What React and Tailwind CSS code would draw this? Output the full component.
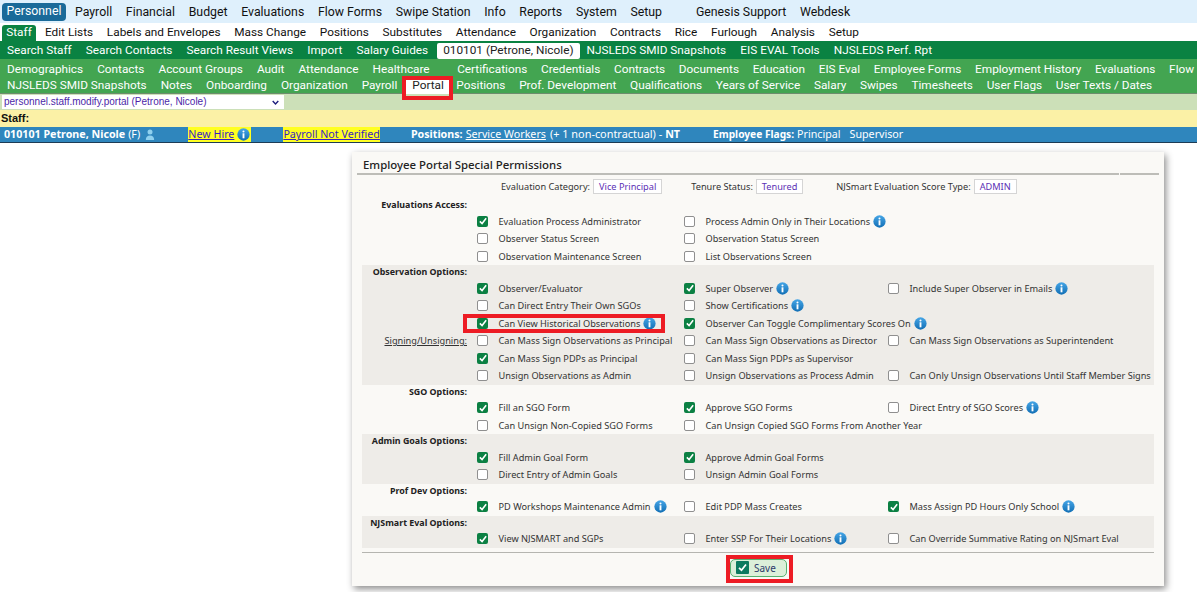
const NAV = "font-['Roboto',sans-serif] text-[11.8px] leading-none";

function Info({ className = "" }) {
  return (
    <svg viewBox="0 0 14 14" className={"w-[13px] h-[13px] shrink-0 " + className}>
      <defs>
        <linearGradient id="ig" x1="0" y1="0" x2="0" y2="1">
          <stop offset="0" stopColor="#45a5e6" />
          <stop offset="1" stopColor="#126fb5" />
        </linearGradient>
      </defs>
      <circle cx="7" cy="7" r="6.6" fill="url(#ig)" />
      <circle cx="7" cy="3.8" r="1.1" fill="#fff" />
      <rect x="6" y="5.7" width="2" height="5.4" fill="#fff" />
    </svg>
  );
}

function Box({ on }) {
  return on ? (
    <span className="w-[11px] h-[11px] rounded-[2px] bg-[#0b8043] flex items-center justify-center shrink-0">
      <svg viewBox="0 0 12 12" className="w-[10px] h-[10px]">
        <path d="M2.2 6.4 L4.9 9 L9.8 2.8" fill="none" stroke="#fff" strokeWidth="1.9" />
      </svg>
    </span>
  ) : (
    <span className="w-[11px] h-[11px] rounded-[2px] border border-[#8f8f8f] bg-white shrink-0" />
  );
}

function Cell({ c }) {
  if (!c) return <div />;
  return (
    <div className="flex items-center whitespace-nowrap">
      <Box on={c[0]} />
      <span className="ml-[10.5px] text-[#333]">{c[1]}</span>
      {c[2] && <Info className="ml-[3px]" />}
    </div>
  );
}

function Row({ label, cells }) {
  return (
    <div className="grid grid-cols-[115px_207px_204px_1fr] h-[17.5px] items-center">
      <div className="text-right pr-[10px] underline text-[#333] whitespace-nowrap">{label}</div>
      <Cell c={cells[0]} />
      <Cell c={cells[1]} />
      <Cell c={cells[2]} />
    </div>
  );
}

function Section({ title, gray, rows }) {
  return (
    <div className={gray ? "bg-[#eeece8]" : ""}>
      <div className="h-[14.5px] w-[105px] text-right font-bold text-[8.9px] text-[#222] whitespace-nowrap leading-[14.5px]">{title}</div>
      {rows.map((r, i) => (
        <Row key={i} label={r.label} cells={r.cells} />
      ))}
    </div>
  );
}

const sections = [
  { title: "Evaluations Access:", rows: [
    { cells: [[1, "Evaluation Process Administrator"], [0, "Process Admin Only in Their Locations", 1]] },
    { cells: [[0, "Observer Status Screen"], [0, "Observation Status Screen"]] },
    { cells: [[0, "Observation Maintenance Screen"], [0, "List Observations Screen"]] },
  ]},
  { title: "Observation Options:", gray: 1, rows: [
    { cells: [[1, "Observer/Evaluator"], [1, "Super Observer", 1], [0, "Include Super Observer in Emails", 1]] },
    { cells: [[0, "Can Direct Entry Their Own SGOs"], [0, "Show Certifications", 1]] },
    { cells: [[1, "Can View Historical Observations", 1], [1, "Observer Can Toggle Complimentary Scores On", 1]] },
    { label: "Signing/Unsigning:", cells: [[0, "Can Mass Sign Observations as Principal"], [0, "Can Mass Sign Observations as Director"], [0, "Can Mass Sign Observations as Superintendent"]] },
    { cells: [[1, "Can Mass Sign PDPs as Principal"], [0, "Can Mass Sign PDPs as Supervisor"]] },
    { cells: [[0, "Unsign Observations as Admin"], [0, "Unsign Observations as Process Admin"], [0, "Can Only Unsign Observations Until Staff Member Signs"]] },
  ]},
  { title: "SGO Options:", rows: [
    { cells: [[1, "Fill an SGO Form"], [1, "Approve SGO Forms"], [0, "Direct Entry of SGO Scores", 1]] },
    { cells: [[0, "Can Unsign Non-Copied SGO Forms"], [0, "Can Unsign Copied SGO Forms From Another Year"]] },
  ]},
  { title: "Admin Goals Options:", gray: 1, rows: [
    { cells: [[1, "Fill Admin Goal Form"], [1, "Approve Admin Goal Forms"]] },
    { cells: [[0, "Direct Entry of Admin Goals"], [0, "Unsign Admin Goal Forms"]] },
  ]},
  { title: "Prof Dev Options:", rows: [
    { cells: [[1, "PD Workshops Maintenance Admin", 1], [0, "Edit PDP Mass Creates"], [1, "Mass Assign PD Hours Only School", 1]] },
  ]},
  { title: "NJSmart Eval Options:", gray: 1, rows: [
    { cells: [[1, "View NJSMART and SGPs"], [0, "Enter SSP For Their Locations", 1], [0, "Can Override Summative Rating on NJSmart Eval"]] },
  ]},
];

const r1 = ["Payroll","Financial","Budget","Evaluations","Flow Forms","Swipe Station","Info","Reports","System","Setup"];
const r2 = ["Edit Lists","Labels and Envelopes","Mass Change","Positions","Substitutes","Attendance","Organization","Contracts","Rice","Furlough","Analysis","Setup"];
const r3a = ["Search Staff","Search Contacts","Search Result Views","Import","Salary Guides"];
const r3b = ["NJSLEDS SMID Snapshots","EIS EVAL Tools","NJSLEDS Perf. Rpt"];
const r4a = ["Demographics","Contacts","Account Groups","Audit","Attendance","Healthcare"];
const r4b = ["Certifications","Credentials","Contracts","Documents","Education","EIS Eval","Employee Forms","Employment History","Evaluations","Flow"];
const r5a = ["NJSLEDS SMID Snapshots","Notes","Onboarding","Organization","Payroll"];
const r5b = ["Positions","Prof. Development","Qualifications","Years of Service","Salary","Swipes","Timesheets","User Flags","User Texts / Dates"];

function Badge({ children }) {
  return <span className="ml-[3px] inline-flex items-center h-[15px] px-[5px] border border-[#d5d5d5] bg-white text-[#5b2fb5]">{children}</span>;
}

function Red({ className }) {
  return <div className={"absolute border-[4px] border-[#ed1c24] pointer-events-none " + className} />;
}

export default function App() {
  return (
    <div className={"relative w-[1197px] h-[592px] overflow-hidden bg-white " + NAV}>
      <div className="h-[23px] bg-[#dff0fc] flex items-center pl-[2px] text-[#111] whitespace-nowrap text-[12.3px]">
        <span className="h-[18px] w-[64px] flex items-center justify-center bg-[#1a6a99] text-white rounded-[4px]">Personnel</span>
        <div className="flex gap-[13.7px] ml-[9px] pt-[1px]">{r1.map((t, i) => <span key={i}>{t}</span>)}</div>
        <div className="flex gap-[13.7px] ml-[34px] pt-[1px]"><span>Genesis Support</span><span>Webdesk</span></div>
      </div>
      <div className="h-[18px] bg-white flex items-end pl-[2px] text-[#111] whitespace-nowrap">
        <span className="h-[16px] w-[34px] flex items-center justify-center bg-[#0a8242] text-white rounded-t-[3px]">Staff</span>
        <div className="flex gap-[13.7px] ml-[9px] h-[16px] items-center">{r2.map((t, i) => <span key={i}>{t}</span>)}</div>
      </div>
      <div className="h-[18px] bg-[#0a8242] flex items-center pl-[7px] pt-[1px] text-white whitespace-nowrap">
        <div className="flex gap-[14.2px]">{r3a.map((t, i) => <span key={i}>{t}</span>)}</div>
        <span className="ml-[9px] h-[16px] px-[6px] flex items-center bg-white text-[#222] rounded-[2px]">010101 (Petrone, Nicole)</span>
        <div className="flex gap-[14.2px] ml-[7px]">{r3b.map((t, i) => <span key={i}>{t}</span>)}</div>
      </div>
      <div className="h-[35px] bg-[#43a551] pl-[7px] pt-[3.5px] text-white whitespace-nowrap border-b border-[#6d8d6d]">
        <div className="h-[15px] flex items-center">
          <div className="flex gap-[14px]">{r4a.map((t, i) => <span key={i}>{t}</span>)}</div>
          <div className="flex gap-[13.7px] ml-[27.5px]">{r4b.map((t, i) => <span key={i}>{t}</span>)}</div>
        </div>
        <div className="h-[15px] mt-[1px] flex items-center">
          <div className="flex gap-[14px]">{r5a.map((t, i) => <span key={i}>{t}</span>)}</div>
          <span className="ml-[9px] h-[15px] px-[6px] flex items-center bg-white text-[#222]">Portal</span>
          <div className="flex gap-[13.7px] ml-[6.5px]">{r5b.map((t, i) => <span key={i}>{t}</span>)}</div>
        </div>
      </div>
      <div className="h-[16px] bg-[#cce0b8] pl-[2px] flex items-center">
        <div className="w-[282px] h-[14px] bg-white flex items-center justify-between pl-[2px] pr-[5px] text-[#4b1fa8] font-['Liberation_Sans',sans-serif] text-[10px]">
          <span>personnel.staff.modify.portal (Petrone, Nicole)</span>
          <svg viewBox="0 0 10 6" className="w-[7px] h-[5px]"><path d="M1 1 L5 5 L9 1" fill="none" stroke="#1c1c7c" strokeWidth="2" /></svg>
        </div>
      </div>
      <div className="h-[17px] bg-[#fbf1a6] flex items-center font-['Liberation_Sans',sans-serif] font-bold text-[11px] text-[#111] pl-[1px]">Staff:</div>
      <div className="h-[16px] bg-[#2f86bd] border-b border-[#1d3c55] flex items-center text-white font-['Noto_Sans',sans-serif] text-[10.7px] whitespace-nowrap">
        <b className="ml-[4px]">010101 Petrone, Nicole</b>
        <span className="ml-[3px]">(F)</span>
        <svg viewBox="0 0 12 14" className="ml-[5px] w-[10px] h-[12px]"><circle cx="6" cy="3.5" r="3" fill="#8fd0ee" /><path d="M1 13 Q1 7.5 6 7.5 Q11 7.5 11 13 Z" fill="#8fd0ee" /></svg>
        <span className="ml-[33px] h-full bg-[#ffff22] text-[#3a1fc0] underline flex items-center pr-[1px]">New Hire <Info className="ml-[3px]" /></span>
        <span className="ml-[32px] h-full bg-[#ffff22] text-[#3a1fc0] underline flex items-center">Payroll Not Verified</span>
        <b className="ml-[31px]">Positions:</b>
        <span className="ml-[3px] underline">Service Workers</span>
        <span className="ml-[4px] text-[10.9px]">(+ 1 non-contractual) -</span>
        <b className="ml-[3px]">NT</b>
        <b className="ml-[33px] text-[10.2px]">Employee Flags:</b>
        <span className="ml-[3px]">Principal</span>
        <span className="ml-[9px]">Supervisor</span>
      </div>

      <div className="ml-[352px] mt-[9px] w-[812px] h-[434px] bg-[#faf9f6] shadow-[2px_3px_7px_rgba(0,0,0,0.45)] font-['Noto_Sans',sans-serif] text-[9.2px] text-[#333]">
        <div className="mx-[5px] h-[21px] flex items-end pl-[6px]">
          <span className="text-[11.4px] font-medium text-[#222] leading-[16px]">Employee Portal Special Permissions</span>
        </div>
        <div className="mx-[5px] h-[2px] flex gap-[1px]">
          <div className="flex-1 bg-[#bdbdb8]" />
          <div className="w-[39px] bg-[#bdbdb8]" />
        </div>
        <div className="h-[23px] flex items-center whitespace-nowrap pl-[149px]">
          <span>Evaluation Category:</span><Badge>Vice Principal</Badge>
          <span className="ml-[29px]">Tenure Status:</span><Badge>Tenured</Badge>
          <span className="ml-[33px]">NJSmart Evaluation Score Type:</span><Badge>ADMIN</Badge>
        </div>
        <div className="mx-[10px]">
          {sections.map((s, i) => <Section key={i} {...s} />)}
          <div className="mt-[4px] border-t border-[#b5b5b0] pt-[6px] flex justify-center">
            <button className="w-[57px] h-[18px] ml-[1px] flex items-center pl-[5px] bg-[#dcefd9] border border-[#58b070] rounded-[5px] text-[#2d3a6b] text-[10px]">
              <span className="w-[13px] h-[13px] bg-[#0d7a5f] flex items-center justify-center rounded-[1px]">
                <svg viewBox="0 0 12 12" className="w-[11px] h-[11px]"><path d="M2.2 6.4 L4.9 9 L9.8 2.8" fill="none" stroke="#fff" strokeWidth="1.9" /></svg>
              </span>
              <span className="ml-[5px]">Save</span>
            </button>
          </div>
        </div>
      </div>

      <Red className="left-[402px] top-[76px] w-[51px] h-[24px]" />
      <Red className="left-[463px] top-[314px] w-[202px] h-[19px]" />
      <Red className="left-[726px] top-[555px] w-[67px] h-[28px]" />
    </div>
  );
}
